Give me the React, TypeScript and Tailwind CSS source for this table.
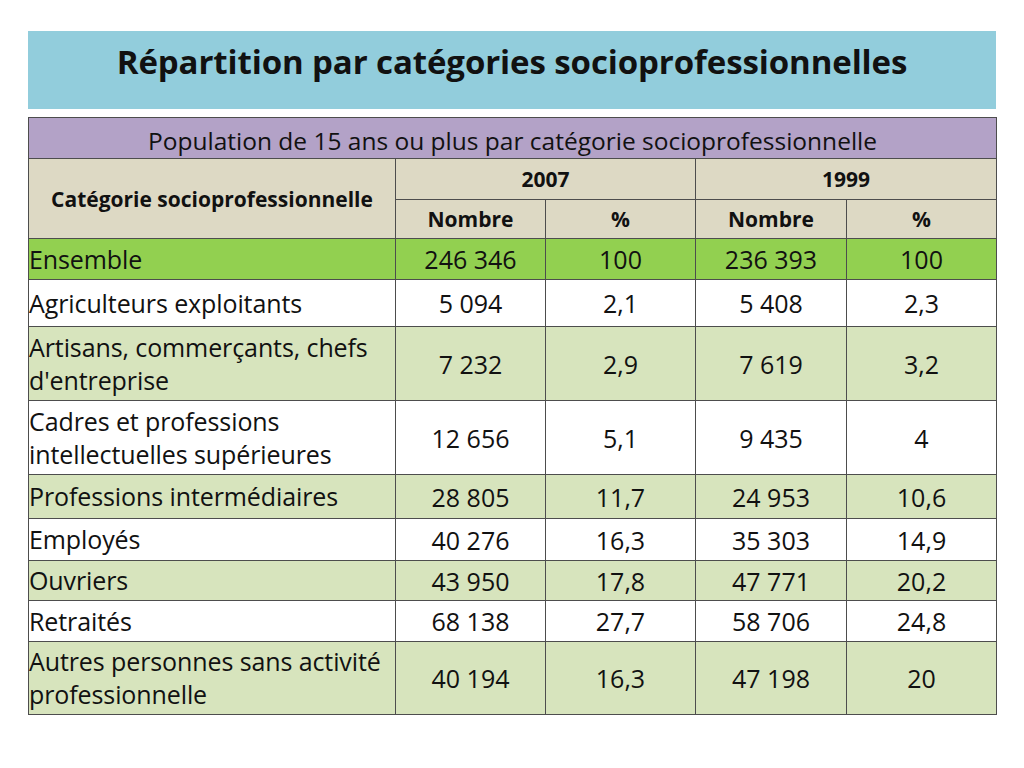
import React from "react";

type Row = { label: string[]; a: string; b: string; c: string; d: string; h: number; bg: string };

const rows: Row[] = [
  { label: ["Ensemble"], a: "246 346", b: "100", c: "236 393", d: "100", h: 41, bg: "bg-[#92d050]" },
  { label: ["Agriculteurs exploitants"], a: "5 094", b: "2,1", c: "5 408", d: "2,3", h: 47, bg: "bg-white" },
  { label: ["Artisans, commerçants, chefs", "d'entreprise"], a: "7 232", b: "2,9", c: "7 619", d: "3,2", h: 74, bg: "bg-[#d7e4bd]" },
  { label: ["Cadres et professions", "intellectuelles supérieures"], a: "12 656", b: "5,1", c: "9 435", d: "4", h: 74, bg: "bg-white" },
  { label: ["Professions intermédiaires"], a: "28 805", b: "11,7", c: "24 953", d: "10,6", h: 44, bg: "bg-[#d7e4bd]" },
  { label: ["Employés"], a: "40 276", b: "16,3", c: "35 303", d: "14,9", h: 42, bg: "bg-white" },
  { label: ["Ouvriers"], a: "43 950", b: "17,8", c: "47 771", d: "20,2", h: 40, bg: "bg-[#d7e4bd]" },
  { label: ["Retraités"], a: "68 138", b: "27,7", c: "58 706", d: "24,8", h: 41, bg: "bg-white" },
  { label: ["Autres personnes sans activité", "professionnelle"], a: "40 194", b: "16,3", c: "47 198", d: "20", h: 73, bg: "bg-[#d7e4bd]" },
];

const cell = "border border-[#4d4d4d] p-0";
const num = `${cell} text-center text-[25px] leading-[30px]`;
const head = `${cell} text-center text-[21px] font-bold leading-[26px]`;

export default function App() {
  return (
    <div
      className="w-[1024px] h-[768px] bg-white text-[#111]"
      style={{ fontFamily: "'Open Sans', 'Noto Sans', sans-serif", fontVariantLigatures: "none" }}
    >
      <div className="pt-[31px] px-[28px]">
        <div className="h-[78px] bg-[#92cddc] flex justify-center pt-[9px]">
          <h1 className="text-[33px] font-bold leading-[44px] tracking-[-0.1px]">
            Répartition par catégories socioprofessionnelles
          </h1>
        </div>
        <table className="mt-[8px] w-[968px] border-collapse table-fixed">
          <colgroup>
            <col className="w-[367px]" />
            <col className="w-[150px]" />
            <col className="w-[150px]" />
            <col className="w-[151px]" />
            <col className="w-[150px]" />
          </colgroup>
          <tbody>
            <tr className="h-[41px] bg-[#b3a2c7]">
              <td colSpan={5} className={`${cell} text-center text-[24.5px] leading-[28px] pt-[5px]`}>
                Population de 15 ans ou plus par catégorie socioprofessionnelle
              </td>
            </tr>
            <tr className="h-[41px] bg-[#ddd9c4]">
              <td rowSpan={2} className={head}>
                Catégorie socioprofessionnelle
              </td>
              <td colSpan={2} className={head}>
                2007
              </td>
              <td colSpan={2} className={head}>
                1999
              </td>
            </tr>
            <tr className="h-[39px] bg-[#ddd9c4]">
              <td className={head}>Nombre</td>
              <td className={head}>%</td>
              <td className={head}>Nombre</td>
              <td className={head}>%</td>
            </tr>
            {rows.map((r) => (
              <tr key={r.label[0]} className={r.bg} style={{ height: r.h }}>
                <td className={`${cell} text-[25px] leading-[33px] pl-0 tracking-[-0.1px]`}>
                  {r.label.map((l) => (
                    <div key={l}>{l}</div>
                  ))}
                </td>
                <td className={num}>{r.a}</td>
                <td className={num}>{r.b}</td>
                <td className={num}>{r.c}</td>
                <td className={num}>{r.d}</td>
              </tr>
            ))}
          </tbody>
        </table>
      </div>
    </div>
  );
}
